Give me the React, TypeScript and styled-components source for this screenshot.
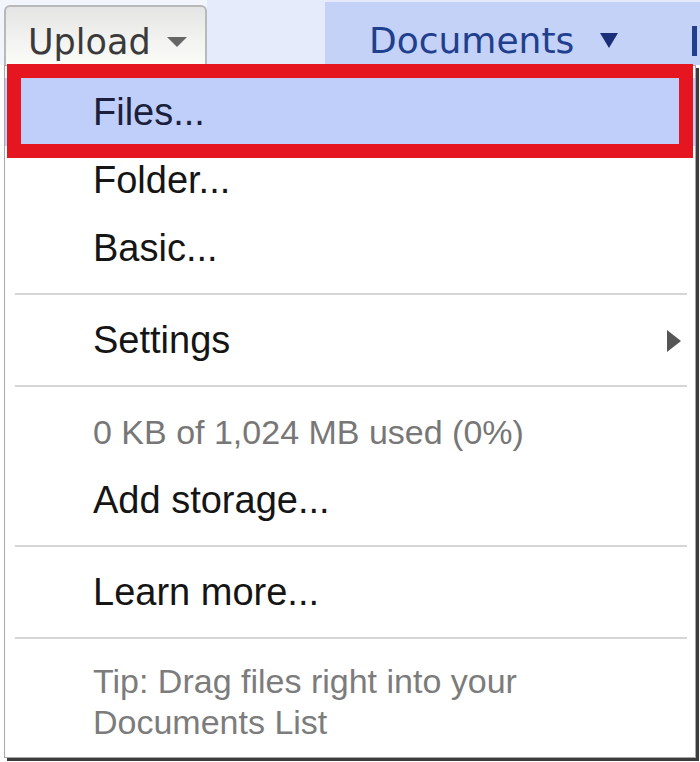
import React from "react";
import styled, { createGlobalStyle } from "styled-components";

const Global = createGlobalStyle`
  html, body { margin: 0; padding: 0; background: #ffffff; }
  #root { width: 700px; height: 762px; overflow: hidden; position: relative; }
`;

const Page = styled.div`
  width: 700px;
  height: 762px;
  display: flex;
  flex-direction: column;
  background: #ffffff;
  font-family: "Liberation Sans", Arial, sans-serif;
`;

const Header = styled.div`
  height: 65px;
  display: flex;
  align-items: stretch;
  background: #f3f5fc;
  overflow: hidden;
  flex-shrink: 0;
`;

const UploadTab = styled.div`
  margin: 5px 0 0 4px;
  width: 203px;
  box-sizing: border-box;
  border: 2px solid #b9b9b9;
  border-bottom: none;
  border-radius: 6px 6px 0 0;
  background: linear-gradient(#e4e4e4, #f2f2f0 55%, #fbfbf8);
  display: flex;
  align-items: center;
  padding: 12px 0 0 22px;
  gap: 16px;
  font-family: "DejaVu Sans", Verdana, sans-serif;
  font-size: 35px;
  color: #3a3a3a;
`;

const TabLabel = styled.span`
  line-height: 1;
`;

const Caret = styled.span<{ $color: string; $w: number; $h: number }>`
  width: 0;
  height: 0;
  border-left: ${(p) => p.$w / 2}px solid transparent;
  border-right: ${(p) => p.$w / 2}px solid transparent;
  border-top: ${(p) => p.$h}px solid ${(p) => p.$color};
`;

const Spacer = styled.div`
  width: 118px;
  background: #e6ebfc;
`;

const DocsTab = styled.div`
  flex: 1;
  background: #c3d2f6;
  display: flex;
  align-items: center;
  padding: 14px 0 0 44px;
  gap: 26px;
  font-family: "DejaVu Sans", Verdana, sans-serif;
  font-size: 36px;
  color: #213f8e;
  border-top: 2px solid #e4eafb;
`;

const NextTab = styled.span`
  margin-left: auto;
  width: 5px;
  height: 30px;
  background: #213f8e;
  margin-right: 3px;
`;

const Menu = styled.div`
  position: relative;
  margin-left: 4px;
  width: 692px;
  height: 693px;
  box-sizing: border-box;
  border: 1px solid #a8a8a8;
  box-shadow: 3px 3px 0 #3c3c3c;
  background: #ffffff;
  padding-top: 12px;
  display: flex;
  flex-direction: column;
`;

const Item = styled.div<{ $active?: boolean; $muted?: boolean }>`
  height: 68px;
  flex-shrink: 0;
  display: flex;
  align-items: center;
  justify-content: space-between;
  padding: 0 14px 0 88px;
  font-size: ${(p) => (p.$muted ? 34 : 38)}px;
  color: ${(p) => (p.$muted ? "#777777" : p.$active ? "#1b1f3d" : "#151515")};
  background: ${(p) => (p.$active ? "#bfcff9" : "transparent")};
`;

const Separator = styled.div`
  height: 2px;
  margin: 11px 8px 11px 10px;
  background: #d5d5d5;
  flex-shrink: 0;
`;

const SubArrow = styled.span`
  width: 0;
  height: 0;
  border-top: 11px solid transparent;
  border-bottom: 11px solid transparent;
  border-left: 14px solid #555555;
  margin-top: 2px;
`;

const Tip = styled.div`
  padding: 11px 20px 0 88px;
  font-size: 34px;
  line-height: 41px;
  color: #7c7c7c;
`;

const Highlight = styled.div`
  position: absolute;
  left: 2px;
  top: -2px;
  width: 686px;
  height: 94px;
  box-sizing: border-box;
  border: 14px solid #e5161f;
  pointer-events: none;
`;

export default function App() {
  return (
    <>
      <Global />
      <Page>
        <Header>
          <UploadTab>
            <TabLabel>Upload</TabLabel>
            <Caret $color="#666666" $w={20} $h={10} />
          </UploadTab>
          <Spacer />
          <DocsTab>
            <TabLabel>Documents</TabLabel>
            <Caret $color="#1a2f7a" $w={18} $h={15} />
            <NextTab />
          </DocsTab>
        </Header>
        <Menu>
          <Item $active>Files...</Item>
          <Item>Folder...</Item>
          <Item>Basic...</Item>
          <Separator />
          <Item>
            Settings
            <SubArrow />
          </Item>
          <Separator />
          <Item $muted>0 KB of 1,024 MB used (0%)</Item>
          <Item>Add storage...</Item>
          <Separator />
          <Item>Learn more...</Item>
          <Separator />
          <Tip>
            Tip: Drag files right into your
            <br />
            Documents List
          </Tip>
          <Highlight />
        </Menu>
      </Page>
    </>
  );
}
